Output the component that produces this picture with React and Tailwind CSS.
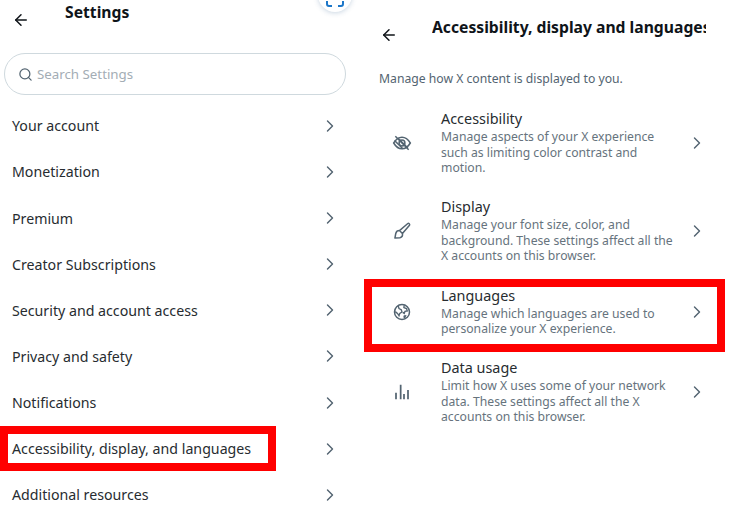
import React from 'react';
import { ArrowLeft, Search, ChevronRight } from 'lucide-react';

const font = 'font-["Noto_Sans",sans-serif]';

const menu = [
  'Your account',
  'Monetization',
  'Premium',
  'Creator Subscriptions',
  'Security and account access',
  'Privacy and safety',
  'Notifications',
  'Accessibility, display, and languages',
  'Additional resources',
];

const EyeOff = () => (
  <svg width="20" height="20" viewBox="0 0 24 24" fill="none" stroke="#536471" strokeWidth="1.8">
    <path d="M2 12c3-5 6.500-7 10-7s7 2 10 7c-3 5-6.500 7-10 7s-7-2-10-7z" />
    <circle cx="12" cy="12" r="3.500" />
    <path d="M4 4l16 16M3 9l10 10M7 6l12 12" />
  </svg>
);

const Brush = () => (
  <svg width="20" height="20" viewBox="0 0 24 24" fill="none" stroke="#536471" strokeWidth="1.8" strokeLinejoin="round">
    <path d="M19 3c1-.8 2.800 1 2 2.200L12.500 15 9 11.500 19 3z" />
    <path d="M9 11.500c-2.500 0-4 1.500-4.500 3.500L3.500 20.500 9.500 20c2.500-.5 3.500-2.500 3-5" />
  </svg>
);

const Globe = () => (
  <svg width="18" height="18" viewBox="0 0 24 24" fill="none" stroke="#536471" strokeWidth="2">
    <circle cx="12" cy="12" r="10" />
    <path d="M7 3.500l1 4 3 1.500 1 3-3 2-1 3-2-3-3-2.500" strokeWidth="1.800" />
    <path d="M15 3l-.5 3 3.500 1.500 1 3-3 .5-1 3-2-1.500" strokeWidth="1.800" />
    <path d="M14.500 17l3-.5-2 4-1-1.500z" fill="#536471" strokeWidth="1" />
  </svg>
);

const Bars = () => (
  <svg width="16" height="16" viewBox="0 0 24 24" fill="none" stroke="#536471" strokeWidth="2.600">
    <path d="M3 13v10M10 1v22M15 15v8M21 9v14" />
  </svg>
);

const ScanBadge = () => (
  <svg width="18" height="18" viewBox="0 0 18 18" fill="none" stroke="#1d77c9" strokeWidth="2">
    <path d="M1 6V3a2 2 0 0 1 2-2h3M12 1h3a2 2 0 0 1 2 2v3M1 12v3a2 2 0 0 0 2 2h3M12 17h3a2 2 0 0 0 2-2v-3" />
  </svg>
);

const settings = [
  {
    title: 'Accessibility',
    lines: ['Manage aspects of your X experience', 'such as limiting color contrast and', 'motion.'],
    icon: <EyeOff />,
    height: 'h-[88px]',
  },
  {
    title: 'Display',
    lines: ['Manage your font size, color, and', 'background. These settings affect all the', 'X accounts on this browser.'],
    icon: <Brush />,
    height: 'h-[88px]',
  },
  {
    title: 'Languages',
    lines: ['Manage which languages are used to', 'personalize your X experience.'],
    icon: <Globe />,
    height: 'h-[73px]',
    marked: true,
  },
  {
    title: 'Data usage',
    lines: ['Limit how X uses some of your network', 'data. These settings affect all the X', 'accounts on this browser.'],
    icon: <Bars />,
    height: 'h-[88px]',
  },
];

const App = () => {
  return (
    <div className={`${font} flex w-[753px] h-[530px] overflow-hidden bg-white text-[#0f1419]`}>
      {/* left panel */}
      <div className="relative w-[364px] shrink-0">
        <div className="absolute left-[318px] top-[-22px] w-[34px] h-[34px] rounded-full bg-white shadow-[0_1px_5px_rgba(80,120,160,0.3)] flex items-center justify-center">
          <div className="mt-[6px]"><ScanBadge /></div>
        </div>
        <div className="flex pl-[12px] h-[53px]">
          <ArrowLeft size={18} strokeWidth={2} className="mt-[11px]" />
          <h1 className="ml-[35px] mt-[1px] text-[15.700px] leading-[22px] font-bold">Settings</h1>
        </div>
        <div className="ml-[4px] w-[342px] h-[42px] border border-[#cfd9de] rounded-full flex items-center pl-[13px] gap-[4px]">
          <Search size={15} strokeWidth={2} className="text-[#536471]" />
          <span className="mt-px text-[13.300px] text-[#a3adb5]">Search Settings</span>
        </div>
        <ul className="mt-[8px]">
          {menu.map((label, i) => (
            <li key={label} className="relative h-[46.080px] flex items-center justify-between pl-[12px] pr-[24px] text-[14.200px] text-[#272c30]">
              {i === 7 && <div className="absolute left-0 top-0 w-[276px] h-[45px] border-[8px] border-[#ff0000]" />}
              <span className="relative">{label}</span>
              <ChevronRight size={20} strokeWidth={1.700} className="text-[#536471]" />
            </li>
          ))}
        </ul>
      </div>

      {/* right panel */}
      <div className="flex-1 min-w-0">
        <div className="flex h-[56px] pl-[16px]">
          <ArrowLeft size={18} strokeWidth={2} className="mt-[26px]" />
          <h2 className="ml-[34px] mt-[16px] w-[274px] h-[24px] overflow-hidden whitespace-nowrap text-[15.700px] leading-[22px] font-bold">
            Accessibility, display and languages
          </h2>
        </div>
        <p className="ml-[15px] mt-[14px] text-[12.200px] leading-[18px] text-[#536471]">Manage how X content is displayed to you.</p>
        <ul className="mt-[11px] w-[361px]">
          {settings.map((item) => (
            <li key={item.title} className={`relative flex items-center pl-[28px] pr-[18px] ${item.height}`}>
              {item.marked && <div className="absolute inset-x-0 top-[4px] h-[73px] border-[8px] border-[#ff0000]" />}
              <div className="w-[49px] shrink-0">
                <div className="w-5 flex justify-center">{item.icon}</div>
              </div>
              <div className="relative flex-1">
                <div className="text-[14.400px] leading-[17px] mb-[2px] text-[#272c30]">{item.title}</div>
                {item.lines.map((line) => (
                  <div key={line} className="text-[12.200px] leading-[15.500px] whitespace-nowrap text-[#66737d]">{line}</div>
                ))}
              </div>
              <ChevronRight size={20} strokeWidth={1.700} className="text-[#536471]" />
            </li>
          ))}
        </ul>
      </div>
    </div>
  );
};

export default App;
